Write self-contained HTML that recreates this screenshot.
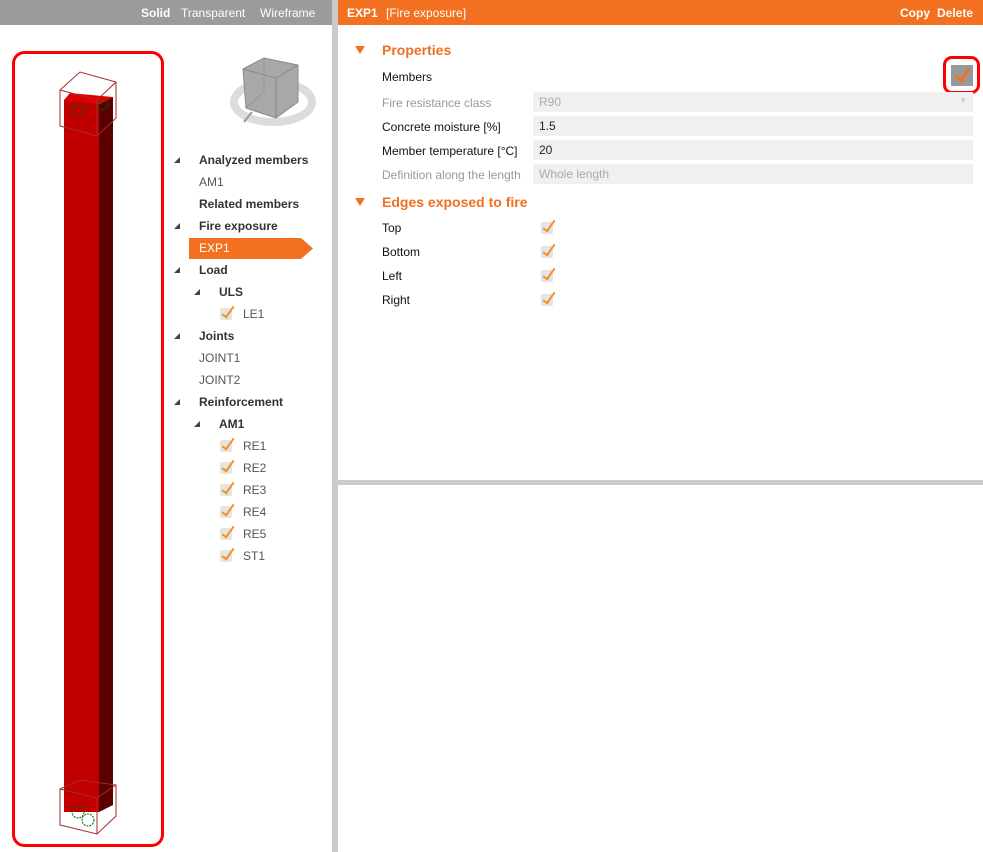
<!DOCTYPE html>
<html><head><meta charset="utf-8"><style>
*{margin:0;padding:0;box-sizing:border-box}
body{width:983px;height:852px;position:relative;background:#fff;font-family:"Liberation Sans",sans-serif;font-size:12px;color:#222;overflow:hidden}
.a{position:absolute;white-space:nowrap}
.b{font-weight:bold;color:#333}
.tri{position:absolute;width:0;height:0;border-left:6px solid transparent;border-bottom:6px solid #444;}
.ck{position:absolute;width:12px;height:12px;background:#e4e4e4;border-radius:2px}
.ck:after{content:"";position:absolute;left:5px;top:-4px;width:4px;height:12px;border:solid #f7901e;border-width:0 2px 2px 0;transform:rotate(35deg)}
.lbl{position:absolute;left:382px;font-size:12px;color:#111}
.gr{color:#999}
.fld{position:absolute;left:533px;width:440px;height:20px;background:#f0f0f0;padding:3px 6px;font-size:12px}
.sec{position:absolute;left:382px;color:#f07022;font-weight:bold;font-size:14px}
.otri{position:absolute;left:355px;width:0;height:0;border-left:5px solid transparent;border-right:5px solid transparent;border-top:8px solid #f07022}
</style></head><body>
<div class="a" style="left:0;top:0;width:332px;height:25px;background:#9b9b9b"></div>
<div class="a" style="left:141px;top:6px;color:#fff;font-weight:bold">Solid</div>
<div class="a" style="left:181px;top:6px;color:#fff">Transparent</div>
<div class="a" style="left:260px;top:6px;color:#fff">Wireframe</div>
<div class="a" style="left:332px;top:0;width:6px;height:852px;background:#cbcbcb"></div>
<div class="a" style="left:338px;top:0;width:645px;height:25px;background:#f37021"></div>
<div class="a" style="left:347px;top:6px;color:#fff;font-weight:bold">EXP1</div>
<div class="a" style="left:386px;top:6px;color:#fff">[Fire exposure]</div>
<div class="a" style="left:900px;top:6px;color:#fff;font-weight:bold">Copy</div>
<div class="a" style="left:937px;top:6px;color:#fff;font-weight:bold">Delete</div>
<div class="a" style="left:338px;top:480px;width:645px;height:5px;background:#cbcbcb"></div>

<svg class="a" style="left:0;top:0" width="332" height="852">
<rect x="13.5" y="52.5" width="149" height="793" rx="11" fill="none" stroke="#f00" stroke-width="3"/>
<rect x="64" y="100" width="35" height="712" fill="#c00000"/>
<polygon points="99,104 113,97 113,805 99,812" fill="#5a0000"/>
<polygon points="64,100 70,93 113,97 99,104" fill="#e00000"/>
<g fill="none" stroke="#a52a2a" stroke-width="1">
<polygon points="60,90 80,72 116,82 116,118 97,136 60,126"/><line x1="60" y1="90" x2="97" y2="100"/><line x1="97" y1="100" x2="116" y2="82"/><line x1="97" y1="100" x2="97" y2="136"/>
<polygon points="60,789 80,780 116,785 116,816 97,834 60,825"/><line x1="60" y1="789" x2="97" y2="798"/><line x1="97" y1="798" x2="116" y2="785"/><line x1="97" y1="798" x2="97" y2="834"/>
</g>
<g fill="none" stroke="#006400" stroke-dasharray="2,1"><circle cx="78" cy="110" r="6"/><circle cx="103" cy="105" r="5"/><circle cx="78" cy="812" r="6"/><circle cx="88" cy="820" r="6"/></g>
<ellipse cx="273" cy="102" rx="39" ry="20" fill="none" stroke="#dcdcdc" stroke-width="8"/>
<polygon points="243,69 264,58 298,65 298,102 276,118 246,108" fill="#a8a8a8" stroke="#888"/>
<polyline points="243,69 276,78 298,65" fill="none" stroke="#888"/><line x1="276" y1="78" x2="276" y2="118" stroke="#888"/>
<polyline points="264,58 264,92 246,108 M264,92 298,102" fill="none" stroke="#999"/>
<line x1="244" y1="122" x2="252" y2="112" stroke="#999" stroke-width="2"/>
</svg>

<div class="tri" style="left:174px;top:157px"></div><div class="a b" style="left:199px;top:153px">Analyzed members</div>
<div class="a" style="left:199px;top:175px;color:#555">AM1</div>
<div class="a b" style="left:199px;top:197px">Related members</div>
<div class="tri" style="left:174px;top:223px"></div><div class="a b" style="left:199px;top:219px">Fire exposure</div>
<svg class="a" style="left:189px;top:238px" width="124" height="21"><polygon points="0,0 112,0 124,10.5 112,21 0,21" fill="#f37021"/></svg>
<div class="a" style="left:199px;top:241px;color:#fff">EXP1</div>
<div class="tri" style="left:174px;top:267px"></div><div class="a b" style="left:199px;top:263px">Load</div>
<div class="tri" style="left:194px;top:289px"></div><div class="a b" style="left:219px;top:285px">ULS</div>
<div class="ck" style="left:220px;top:308px"></div><div class="a" style="left:243px;top:307px;color:#555">LE1</div>
<div class="tri" style="left:174px;top:333px"></div><div class="a b" style="left:199px;top:329px">Joints</div>
<div class="a" style="left:199px;top:351px;color:#555">JOINT1</div>
<div class="a" style="left:199px;top:373px;color:#555">JOINT2</div>
<div class="tri" style="left:174px;top:399px"></div><div class="a b" style="left:199px;top:395px">Reinforcement</div>
<div class="tri" style="left:194px;top:421px"></div><div class="a b" style="left:219px;top:417px">AM1</div>
<div class="ck" style="left:220px;top:440px"></div><div class="a" style="left:243px;top:439px;color:#555">RE1</div>
<div class="ck" style="left:220px;top:462px"></div><div class="a" style="left:243px;top:461px;color:#555">RE2</div>
<div class="ck" style="left:220px;top:484px"></div><div class="a" style="left:243px;top:483px;color:#555">RE3</div>
<div class="ck" style="left:220px;top:506px"></div><div class="a" style="left:243px;top:505px;color:#555">RE4</div>
<div class="ck" style="left:220px;top:528px"></div><div class="a" style="left:243px;top:527px;color:#555">RE5</div>
<div class="ck" style="left:220px;top:550px"></div><div class="a" style="left:243px;top:549px;color:#555">ST1</div>

<div class="otri" style="top:46px"></div><div class="sec" style="top:42px">Properties</div>
<div class="lbl" style="top:70px">Members</div>
<div class="a" style="left:943px;top:56px;width:37px;height:38px;border:3px solid #f00;border-radius:9px"></div>
<div class="a" style="left:951px;top:65px;width:22px;height:21px;background:#999"></div>
<svg class="a" style="left:951px;top:65px" width="22" height="21"><path d="M5 11 L10 16 L18 4" fill="none" stroke="#f37021" stroke-width="3"/></svg>
<div class="lbl gr" style="top:96px">Fire resistance class</div><div class="fld" style="top:92px;color:#aaa">R90<span style="position:absolute;right:6px;top:4px;font-size:8px;color:#ccc">▼</span></div>
<div class="lbl" style="top:120px">Concrete moisture [%]</div><div class="fld" style="top:116px">1.5</div>
<div class="lbl" style="top:144px">Member temperature [°C]</div><div class="fld" style="top:140px">20</div>
<div class="lbl gr" style="top:168px">Definition along the length</div><div class="fld" style="top:164px;color:#aaa">Whole length</div>
<div class="otri" style="top:198px"></div><div class="sec" style="top:194px">Edges exposed to fire</div>
<div class="lbl" style="top:221px">Top</div><div class="ck" style="left:541px;top:222px"></div>
<div class="lbl" style="top:245px">Bottom</div><div class="ck" style="left:541px;top:246px"></div>
<div class="lbl" style="top:269px">Left</div><div class="ck" style="left:541px;top:270px"></div>
<div class="lbl" style="top:293px">Right</div><div class="ck" style="left:541px;top:294px"></div>
</body></html>
